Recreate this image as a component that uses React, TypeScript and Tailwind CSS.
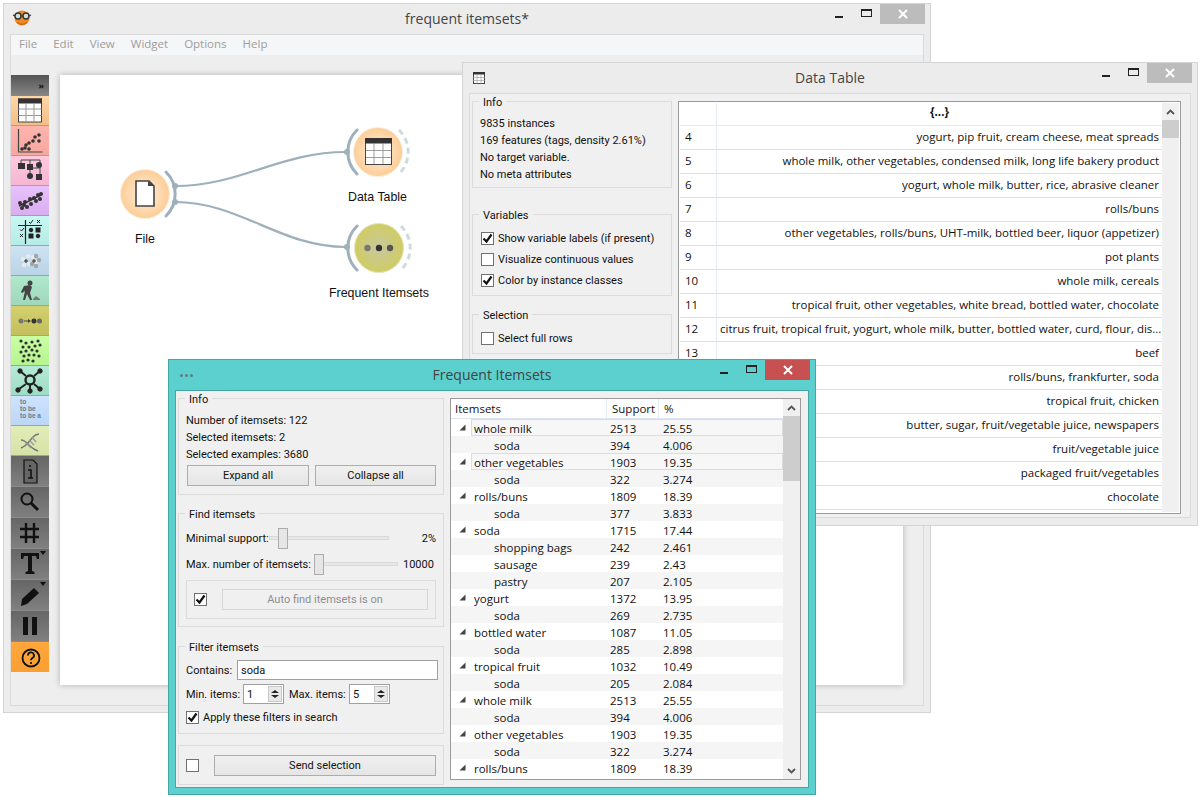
import type { ReactNode } from "react";

const ui = "font-['Open_Sans',sans-serif] text-[11.500px] leading-[17px] whitespace-nowrap text-[#111]";
const panel = "flex shrink-0 flex-col font-['Roboto',sans-serif] text-[11px]";

function WinControls({ active }: { active?: boolean }) {
  return (
    <div className="flex items-start justify-end">
      <span className="mr-[18px] mt-[12px] h-[2px] w-[8px] bg-[#222]" />
      <span className="mr-[8px] mt-[5px] h-[8px] w-[11px] border border-t-2 border-[#222]" />
      <span
        className={`flex h-[20px] w-[45px] items-center justify-center text-white ${active ? "bg-[#c75050]" : "bg-[#bcbcbc]"}`}
      >
        <svg width="10" height="10" viewBox="0 0 10 10" stroke="currentColor" strokeWidth="2">
          <path d="M1 1l8 8M9 1l-8 8" />
        </svg>
      </span>
    </div>
  );
}

function TitleBar({ icon, title, active }: { icon: ReactNode; title: string; active?: boolean }) {
  return (
    <div className="grid h-[30px] grid-cols-[1fr_auto_1fr] px-[5px]">
      <div className="flex h-[30px] items-center pl-[2px]">{icon}</div>
      <div className="pt-[4px] font-['Open_Sans',sans-serif] text-[14px] leading-[22px] text-[#444]">{title}</div>
      <WinControls active={active} />
    </div>
  );
}

function Group({ title, className, children }: { title?: string; className: string; children: ReactNode }) {
  return (
    <div className={`relative border border-[#dcdcdc] ${className}`}>
      {title ? <span className="absolute -top-[7px] left-[6px] bg-[#f0f0f0] px-[4px] leading-[15px]">{title}</span> : null}
      {children}
    </div>
  );
}

function Check({ on }: { on?: boolean }) {
  return (
    <span className="flex h-[13px] w-[13px] shrink-0 items-center justify-center border border-[#707070] bg-white">
      {on ? (
        <svg width="11" height="11" viewBox="0 0 11 11" fill="none" stroke="#111" strokeWidth="2.2">
          <path d="M1.5 5.5l3 3 5-7" />
        </svg>
      ) : null}
    </span>
  );
}

function Btn({ className, children }: { className: string; children: ReactNode }) {
  return (
    <div className={`flex h-[21px] items-center justify-center border border-[#adadad] bg-linear-to-b from-[#f0f0f0] to-[#e5e5e5] ${className}`}>
      {children}
    </div>
  );
}

function Chevron({ down }: { down?: boolean }) {
  return (
    <svg width="9" height="6" viewBox="0 0 9 6" fill="none" stroke="#555" strokeWidth="1.8">
      <path d={down ? "M1 1l3.5 3.5L8 1" : "M1 5l3.5-3.5L8 5"} />
    </svg>
  );
}

function Spin({ value }: { value: string }) {
  return (
    <div className="flex h-[20px] w-[41px] items-center border border-[#a0a0a0] bg-white pl-[3px]">
      <span className="flex-1 pt-[1px]">{value}</span>
      <span className="mr-[1px] flex h-[16px] w-[14px] flex-col items-center justify-center gap-[2px] border border-[#c8c8c8] bg-[#e8e8e8]">
        <span className="h-0 w-0 border-x-[4px] border-b-[3px] border-x-transparent border-b-[#222]" />
        <span className="h-0 w-0 border-x-[4px] border-t-[3px] border-x-transparent border-t-[#222]" />
      </span>
    </div>
  );
}

function Slider({ track, left }: { track: string; left: string }) {
  return (
    <div className={`relative h-[21px] shrink-0 ${track}`}>
      <div className="absolute left-0 right-0 top-[8px] h-[4px] border border-[#d9d9d9] bg-[#e7e7e7]" />
      <div className={`absolute top-0 h-[21px] w-[10px] border border-[#acacac] bg-[#e6e6e6] ${left}`} />
    </div>
  );
}

const dockColors = [
  "from-[#ffd6a6] to-[#f2bf88]",
  "from-[#ffb4ae] to-[#f7a79f]",
  "from-[#ffc9de] to-[#f6b6d2]",
  "from-[#e7c1fb] to-[#d9aef0]",
  "from-[#c8f8f3] to-[#b5ebe6]",
  "from-[#cde3f3] to-[#b9d4e6]",
  "from-[#afe8cd] to-[#9ed8bb]",
  "from-[#d4d06e] to-[#c2bf5c]",
  "from-[#caffa4] to-[#b5f58f]",
  "from-[#b4ead6] to-[#9fdcc5]",
  "from-[#cde3ff] to-[#bcd6f7]",
  "from-[#e2edb8] to-[#d4e2a6]",
];

function Dots({ pts, r = 1.8, fill = "#333" }: { pts: number[][]; r?: number; fill?: string }) {
  return (
    <>
      {pts.map(([x, y], i) => (
        <circle key={i} cx={x} cy={y} r={r} fill={fill} />
      ))}
    </>
  );
}

const dockIcons: ReactNode[] = [
  <g key="t">
    <rect x="7.5" y="3" width="23" height="23" fill="#fff" stroke="#444" />
    <rect x="7" y="2.5" width="24" height="5" fill="#333" />
    <path d="M7.5 13h23M7.5 19.5h23M15 7.5V26M23 7.5V26" stroke="#999" />
  </g>,
  <g key="s">
    <path d="M7.5 3v23h24" fill="none" stroke="#444" strokeWidth="1.2" />
    <Dots pts={[[11, 23], [15, 19], [18, 23], [22, 15], [18, 17], [24, 11], [28, 15], [28, 9], [14, 22]]} />
  </g>,
  <g key="tr">
    <path d="M10 7V4h19v3M19 4v4M29 9v3h-10M19 12v7M29 12v7" fill="none" stroke="#444" />
    <rect x="7" y="7" width="7" height="6" fill="#333" />
    <rect x="16" y="8" width="6" height="6" fill="#333" />
    <circle cx="28" cy="9" r="3" fill="#333" />
    <circle cx="19" cy="20" r="3" fill="#333" />
    <rect x="25" y="18" width="6" height="6" fill="#333" />
  </g>,
  <g key="r">
    <path d="M8 20L30 9" stroke="#333" strokeWidth="1.5" />
    <Dots r={2} pts={[[9, 17], [11, 22], [14, 16], [16, 21], [19, 13], [20, 18], [23, 12], [25, 15], [27, 9], [29, 13], [30, 8], [13, 19]]} />
  </g>,
  <g key="c" fill="none" stroke="#222">
    <path d="M14.5 4v24M7 9.5h24" strokeWidth="1.2" />
    <path d="M18 6l1.5 1.5L22 4M26 4l3 3M29 4l-3 3M9 13.5l1.5 1.5L13 12M9 18l3 3M12 18l-3 3" />
    <circle cx="20" cy="14" r="1.8" fill="#222" />
    <rect x="25" y="12" width="4" height="4" fill="#222" />
    <rect x="18" y="18" width="4" height="4" fill="#222" />
    <circle cx="27" cy="20" r="1.8" fill="#222" />
  </g>,
  <g key="b">
    <Dots fill="#eaeaea" r={2.2} pts={[[12, 13], [17, 10], [18, 18], [13, 19], [22, 11], [25, 16]]} />
    <Dots fill="#9fa6aa" r={2.2} pts={[[25, 10], [28, 14], [21, 18], [25, 20]]} />
    <path d="M13 15h4M15 13v4M21 15h4M23 13v4" stroke="#333" />
  </g>,
  <g key="d" fill="#444">
    <circle cx="19" cy="7" r="2.5" />
    <path d="M13 10l6-1 2 2-2 6 2 7h-2l-3-6-2 6h-2l2-9-3 2-1-1z" />
    <path d="M22 23l3-3 4 3v1h-7z" fill="#777" />
  </g>,
  <g key="f">
    <circle cx="10" cy="15" r="2.5" fill="#777" />
    <circle cx="23" cy="15" r="2.5" fill="#333" />
    <circle cx="28.5" cy="15" r="2.5" fill="#666" />
    <path d="M13 15h6" stroke="#444" />
    <path d="M17 13l3 2-3 2z" fill="#444" />
  </g>,
  <g key="l">
    <Dots r={1.6} pts={[[10, 5], [15, 7], [21, 6], [27, 5], [12, 11], [18, 11], [24, 10], [29, 9], [10, 16], [15, 15], [21, 14], [26, 15], [13, 20], [18, 19], [23, 19], [28, 20], [12, 25], [17, 24], [22, 25]]} />
  </g>,
  <g key="n" stroke="#222" fill="none">
    <circle cx="19" cy="14" r="4.5" strokeWidth="2.4" />
    <path d="M15 10l-6-5M23 10l6-5M15 18l-7 5M23 18l6 5M19 19v5" strokeWidth="2" />
    <Dots fill="#222" r={2.2} pts={[[9, 5], [29, 5], [7, 24], [29, 23], [19, 25]]} />
  </g>,
  null,
  <g key="dna" fill="none" stroke="#777" strokeWidth="1.4">
    <path d="M10 22c6-2 9-8 12-11 2-2 4-3 6-3" />
    <path d="M10 14c4 0 6 3 9 6 2 2 5 4 8 5" />
    <path d="M15 17l5 5M18 14l5 5M21 11l4 5" stroke="#999" />
  </g>,
  <g key="i">
    <path d="M13 4h9l4 4v19H13z" fill="#666" stroke="#111" strokeWidth="1.2" />
    <path d="M19 9v2M17 14h3v8h1.5M17 22h5" stroke="#111" strokeWidth="1.6" fill="none" />
  </g>,
  <g key="m" fill="none" stroke="#111">
    <circle cx="16" cy="12" r="5.5" strokeWidth="2" />
    <path d="M20 16l7 7" strokeWidth="3" />
  </g>,
  <path key="h" d="M15 5v20M23 5v20M9 11h19M9 19h19" stroke="#111" strokeWidth="2.4" />,
  <g key="x">
    <path d="M10 4h18v6h-2l-1-3h-4v15l2.500 1v2h-9v-2l2.500-1V7h-4l-1 3h-2z" fill="#111" />
    <path d="M29 2h6l-3 4z" fill="#111" />
  </g>,
  <g key="p">
    <path d="M10 26l1-7 12-11 5 5-12 11z" fill="#111" />
    <path d="M29 2h6l-3 4z" fill="#111" />
  </g>,
  <path key="pa" d="M12 6h5v18h-5zM21 6h5v18h-5z" fill="#111" />,
  <g key="q">
    <circle cx="20" cy="16" r="8.500" fill="none" stroke="#111" strokeWidth="1.800" />
    <path d="M17 13.500a3 3 0 1 1 4.500 2.500c-1 .6-1.500 1-1.500 2.200" fill="none" stroke="#111" strokeWidth="1.800" />
    <circle cx="20" cy="21" r="1.100" fill="#111" />
  </g>,
];

function Dock() {
  return (
    <div className="h-[597px] w-[38px] shrink-0">
      <div className="flex h-[21px] items-center justify-end bg-linear-to-b from-[#555] to-[#878787] pr-[5px] text-[9px] font-bold leading-none text-[#111]">
        »
      </div>
      {dockColors.map((c, i) => (
        <div key={c} className={`h-[30px] border-b border-[#9aa69a] bg-linear-to-b ${c}`}>
          {i === 10 ? (
            <div className="pl-[9px] pt-[2px] font-['Liberation_Sans',sans-serif] text-[6.500px] font-bold leading-[7px] text-[#6a7a8a]">
              to
              <br />
              to be
              <br />
              to be a
            </div>
          ) : (
            <svg width="38" height="30" viewBox="0 0 38 30">
              {dockIcons[i]}
            </svg>
          )}
        </div>
      ))}
      {[12, 13, 14, 15, 16, 17].map((i) => (
        <div key={i} className="h-[31px] border-b border-[#8a8a8a] bg-linear-to-b from-[#666] to-[#808080]">
          <svg width="38" height="30" viewBox="0 0 38 30">
            {dockIcons[i]}
          </svg>
        </div>
      ))}
      <div className="h-[30px] bg-linear-to-b from-[#ffa73c] to-[#fb9f32]">
        <svg width="38" height="30" viewBox="0 0 38 30">
          {dockIcons[18]}
        </svg>
      </div>
    </div>
  );
}

function Workflow() {
  return (
    <div className="relative h-[610px] w-[843px] bg-white font-['Liberation_Sans',sans-serif] text-[12.400px] leading-[14px] text-[#111] shadow-[0_0_6px_rgba(0,0,0,0.25)]">
      <svg width="843" height="610" viewBox="60 75 843 610" className="absolute inset-0">
        <defs>
          <radialGradient id="orange">
            <stop offset="0%" stopColor="#fff0dd" />
            <stop offset="100%" stopColor="#fdcd96" />
          </radialGradient>
          <radialGradient id="olive">
            <stop offset="0%" stopColor="#c9c7a0" />
            <stop offset="100%" stopColor="#cfcd63" />
          </radialGradient>
        </defs>
        <g fill="none" stroke="#9db0bb" strokeWidth="2.2">
          <path d="M175 186C240 186 280 152 346 152" />
          <path d="M175 202C240 202 280 247 346 247" />
        </g>
        <g fill="none" stroke="#9db0bb" strokeWidth="3" strokeLinecap="round">
          <path d="M166 172a31 31 0 0 1 0 44" />
          <path d="M357 130a31 31 0 0 0 0 44" />
          <path d="M357 226a31 31 0 0 0 0 44" />
        </g>
        <g fill="none" stroke="#cfdadf" strokeWidth="3" strokeDasharray="6 4">
          <path d="M399 130a31 31 0 0 1 0 44" />
          <path d="M401 226a31 31 0 0 1 0 44" />
        </g>
        <g fill="#9db0bb">
          <circle cx="175" cy="186" r="3" />
          <circle cx="175" cy="202" r="3" />
          <circle cx="347" cy="152" r="3" />
          <circle cx="347" cy="247" r="3" />
        </g>
        <circle cx="145" cy="194" r="24.500" fill="url(#orange)" stroke="#fbeee0" />
        <path d="M136 181h13l5 5v20h-18z" fill="#fff" stroke="#444" strokeWidth="1.600" />
        <path d="M148 181l6 5h-6z" fill="#444" />
        <circle cx="378" cy="152" r="24.500" fill="url(#orange)" stroke="#fbeee0" />
        <rect x="365.500" y="138.500" width="26" height="26" fill="#fff" stroke="#444" />
        <rect x="365" y="138" width="27" height="5.500" fill="#333" />
        <path d="M366 150.500h25M366 157.500h25M374 143v21M383 143v21" stroke="#888" strokeWidth="0.800" />
        <circle cx="379" cy="248" r="24.500" fill="url(#olive)" stroke="#e4e4c0" />
        <circle cx="367.500" cy="248" r="3.200" fill="#777" />
        <circle cx="379" cy="248" r="3.200" fill="#333" />
        <circle cx="390" cy="248" r="3.200" fill="#555" />
      </svg>
      <span className="absolute left-[75px] top-[157px]">File</span>
      <span className="absolute left-[288px] top-[115px]">Data Table</span>
      <span className="absolute left-[269px] top-[211px]">Frequent Itemsets</span>
    </div>
  );
}

function MainWindow() {
  return (
    <div className="absolute left-[3px] top-[3px] h-[710px] w-[928px] border border-[#d4d4d4] bg-[#ececec]">
      <TitleBar
        title="frequent itemsets*"
        icon={
          <svg width="20" height="18" viewBox="0 0 20 18" className="-mt-[2px] ml-[1px]">
            <circle cx="10" cy="9" r="7.500" fill="#f08a1e" />
            <path d="M5 13c3 3 7 3 10 0" stroke="#b45f10" fill="none" />
            <circle cx="6" cy="7" r="3" fill="#cfe2e2" stroke="#333" strokeWidth="1.400" />
            <circle cx="14" cy="7" r="3" fill="#cfe2e2" stroke="#333" strokeWidth="1.400" />
            <path d="M9 7h2M1 6l2 1M19 6l-2 1" stroke="#333" strokeWidth="1.200" />
          </svg>
        }
      />
      <div className="mx-[6px] h-[672px] border border-[#dadada] bg-[#eeeeee]">
        <div className="flex h-[20px] items-center gap-[16px] bg-[#f5f6f7] pb-[2px] pl-[8px] font-['Open_Sans',sans-serif] text-[11.500px] text-[#9d9d9d]">
          <span>File</span>
          <span>Edit</span>
          <span>View</span>
          <span>Widget</span>
          <span>Options</span>
          <span>Help</span>
        </div>
        <div className="flex pt-[20px]">
          <Dock />
          <div className="ml-[11px]">
            <Workflow />
          </div>
        </div>
      </div>
    </div>
  );
}

const tableRows: [string, string][] = [
  ["4", "yogurt, pip fruit, cream cheese, meat spreads"],
  ["5", "whole milk, other vegetables, condensed milk, long life bakery product"],
  ["6", "yogurt, whole milk, butter, rice, abrasive cleaner"],
  ["7", "rolls/buns"],
  ["8", "other vegetables, rolls/buns, UHT-milk, bottled beer, liquor (appetizer)"],
  ["9", "pot plants"],
  ["10", "whole milk, cereals"],
  ["11", "tropical fruit, other vegetables, white bread, bottled water, chocolate"],
  ["12", "citrus fruit, tropical fruit, yogurt, whole milk, butter, bottled water, curd, flour, dis..."],
  ["13", "beef"],
  ["", "rolls/buns, frankfurter, soda"],
  ["", "tropical fruit, chicken"],
  ["", "butter, sugar, fruit/vegetable juice, newspapers"],
  ["", "fruit/vegetable juice"],
  ["", "packaged fruit/vegetables"],
  ["", "chocolate"],
];

function DataTableWindow() {
  return (
    <div className={`absolute left-[462px] top-[62px] h-[464px] w-[736px] border border-[#d4d4d4] bg-[#ececec] ${ui}`}>
      <TitleBar
        title="Data Table"
        icon={
          <svg width="12" height="12" viewBox="0 0 12 12" className="ml-[3px]">
            <rect x="0.500" y="0.500" width="11" height="11" fill="#fff" stroke="#444" />
            <rect x="0" y="0" width="12" height="2.500" fill="#333" />
            <path d="M0 5.500h12M0 8.500h12M4 2v10M8 2v10" stroke="#999" strokeWidth="0.600" />
          </svg>
        }
      />
      <div className="mx-[6px] flex h-[425px] gap-[6px] border border-[#dadada] bg-[#f0f0f0] pl-[2px] pt-[7px]">
        <div className={`w-[200px] ${panel}`}>
          <Group title="Info" className="h-[87px] pl-[7px] pt-[13px]">
            <div>9835 instances</div>
            <div>169 features (tags, density 2.61%)</div>
            <div>No target variable.</div>
            <div>No meta attributes</div>
          </Group>
          <Group title="Variables" className="mt-[26px] flex h-[82px] flex-col gap-[8px] pl-[8px] pt-[17px]">
            {[["Show variable labels (if present)", true], ["Visualize continuous values", false], ["Color by instance classes", true]].map(([label, on]) => (
              <label key={label as string} className="flex h-[13px] items-center gap-[4px]">
                <Check on={on as boolean} />
                <span>{label}</span>
              </label>
            ))}
          </Group>
          <Group title="Selection" className="mt-[18px] flex h-[40px] items-start pl-[8px] pt-[17px]">
            <label className="flex h-[13px] items-center gap-[4px]">
              <Check />
              <span>Select full rows</span>
            </label>
          </Group>
        </div>
        <div className="flex h-[413px] w-[503px] border border-[#9a9a9a] bg-white p-[1px]">
          <div className="min-w-0 flex-1 overflow-hidden">
            <div className="flex h-[23px] border-b border-[#e4ebf5] bg-white">
              <div className="w-[37px] border-r border-[#e4ebf5]" />
              <div className="flex-1 text-center font-bold">{"{...}"}</div>
            </div>
            {tableRows.map(([n, text], i) => (
              <div key={i} className="flex h-[24px] border-b border-[#dedede] leading-[22px]">
                <div className="w-[37px] shrink-0 border-r border-[#e4ebf5] pl-[5px]">{n}</div>
                <div className={`flex-1 px-[3px] ${n === "12" ? "text-left" : "text-right"}`}>{text}</div>
              </div>
            ))}
          </div>
          <div className="flex w-[17px] shrink-0 flex-col items-center bg-[#f0f0f0]">
            <div className="flex h-[17px] items-center">
              <Chevron />
            </div>
            <div className="h-[18px] w-full bg-[#cdcdcd]" />
          </div>
        </div>
      </div>
    </div>
  );
}

const treeRows: [string, string, string, number, boolean?][] = [
  ["whole milk", "2513", "25.55", 0, true],
  ["soda", "394", "4.006", 1],
  ["other vegetables", "1903", "19.35", 0, true],
  ["soda", "322", "3.274", 1],
  ["rolls/buns", "1809", "18.39", 0],
  ["soda", "377", "3.833", 1],
  ["soda", "1715", "17.44", 0],
  ["shopping bags", "242", "2.461", 1],
  ["sausage", "239", "2.43", 1],
  ["pastry", "207", "2.105", 1],
  ["yogurt", "1372", "13.95", 0],
  ["soda", "269", "2.735", 1],
  ["bottled water", "1087", "11.05", 0],
  ["soda", "285", "2.898", 1],
  ["tropical fruit", "1032", "10.49", 0],
  ["soda", "205", "2.084", 1],
  ["whole milk", "2513", "25.55", 0],
  ["soda", "394", "4.006", 1],
  ["other vegetables", "1903", "19.35", 0],
  ["soda", "322", "3.274", 1],
  ["rolls/buns", "1809", "18.39", 0],
];

function TreeRow({ row, odd }: { row: (typeof treeRows)[number]; odd: boolean }) {
  const [name, support, pct, level, selected] = row;
  return (
    <div className={`flex h-[17px] ${odd ? "bg-[#f5f5f5]" : "bg-white"}`}>
      <div className="flex w-[20px] shrink-0 items-center justify-center pl-[2px]">
        {level === 0 ? (
          <svg width="7" height="7" viewBox="0 0 7 7">
            <path d="M6.500 0.500v6h-6z" fill="#444" />
          </svg>
        ) : null}
      </div>
      <div className={`grid flex-1 grid-cols-[136px_53px_1fr] items-center ${selected ? "border border-[#dcdcdc] bg-[#f7f7f7]" : "border border-transparent"}`}>
        <span className={level === 1 ? "pl-[22px]" : "pl-[2px]"}>{name}</span>
        <span className="pl-[2px]">{support}</span>
        <span className="pl-[2px]">{pct}</span>
      </div>
    </div>
  );
}

function FrequentWindow() {
  return (
    <div className={`absolute left-[168px] top-[359px] h-[436px] w-[648px] border border-[#45a5a3] bg-[#5bd0ce] ${ui}`}>
      <TitleBar
        active
        title="Frequent Itemsets"
        icon={
          <span className="ml-[4px] flex gap-[2px]">
            <span className="h-[3px] w-[3px] rounded-full bg-[#5d7d7d]" />
            <span className="h-[3px] w-[3px] rounded-full bg-[#5d7d7d]" />
            <span className="h-[3px] w-[3px] rounded-full bg-[#5d7d7d]" />
          </span>
        }
      />
      <div className="mx-[6px] flex h-[398px] gap-[6px] border border-[#45a5a3] bg-[#f0f0f0] pl-[2px] pt-[7px]">
        <div className={`w-[266px] ${panel}`}>
          <Group title="Info" className="h-[97px] pl-[7px] pt-[13px]">
            <div>Number of itemsets: 122</div>
            <div>Selected itemsets: 2</div>
            <div>Selected examples: 3680</div>
            <div className="mt-[2px] flex gap-[6px] pl-[1px]">
              <Btn className="w-[122px]">Expand all</Btn>
              <Btn className="w-[121px]">Collapse all</Btn>
            </div>
          </Group>
          <Group title="Find itemsets" className="mt-[18px] h-[114px] px-[7px] pt-[14px]">
            <div className="flex h-[21px] items-center">
              <span className="w-[83px] shrink-0">Minimal support:</span>
              <Slider track="w-[120px]" left="left-[9px]" />
              <span className="flex-1 text-right">2%</span>
            </div>
            <div className="mt-[5px] flex h-[21px] items-center">
              <span className="w-[128px] shrink-0">Max. number of itemsets:</span>
              <Slider track="w-[84px]" left="left-0" />
              <span className="pl-[5px]">10000</span>
            </div>
            <div className="mt-[5px] flex h-[39px] items-center gap-[15px] border border-[#dcdcdc] pl-[7px]">
              <Check on />
              <div className="flex h-[21px] w-[206px] items-center justify-center border border-[#d8d8d8] text-[#8f8f8f]">Auto find itemsets is on</div>
            </div>
          </Group>
          <Group title="Filter itemsets" className="mt-[19px] h-[88px] pl-[7px] pt-[13px]">
            <div className="flex h-[20px] items-center">
              <span className="w-[51px]">Contains:</span>
              <div className="flex h-[20px] w-[201px] items-center border border-[#a0a0a0] bg-white pl-[3px]">soda</div>
            </div>
            <div className="mt-[4px] flex items-center">
              <span className="w-[57px]">Min. items:</span>
              <Spin value="1" />
              <span className="w-[65px] pl-[5px]">Max. items:</span>
              <Spin value="5" />
            </div>
            <label className="mt-[7px] flex h-[13px] items-center gap-[4px]">
              <Check on />
              <span>Apply these filters in search</span>
            </label>
          </Group>
          <Group className="mt-[11px] flex h-[40px] items-center pl-[7px]">
            <Check />
            <Btn className="ml-[15px] w-[222px]">Send selection</Btn>
          </Group>
        </div>
        <div className="flex h-[382px] w-[351px] border border-[#9a9a9a] bg-white">
          <div className="min-w-0 flex-1">
            <div className="grid h-[20px] grid-cols-[156px_52px_1fr] border-b border-[#dde6f4]">
              <span className="border-r border-[#e4ebf5] pl-[4px] leading-[19px]">Itemsets</span>
              <span className="border-r border-[#e4ebf5] pl-[5px] leading-[19px]">Support</span>
              <span className="pl-[5px] leading-[19px]">%</span>
            </div>
            {treeRows.map((row, i) => (
              <TreeRow key={i} row={row} odd={i % 2 === 1} />
            ))}
          </div>
          <div className="flex w-[17px] shrink-0 flex-col items-center justify-between bg-[#f0f0f0] pb-[5px]">
            <div className="w-full">
              <div className="flex h-[17px] items-center justify-center">
                <Chevron />
              </div>
              <div className="h-[65px] w-full bg-[#cdcdcd]" />
            </div>
            <Chevron down />
          </div>
        </div>
      </div>
    </div>
  );
}

export default function App() {
  return (
    <div className="relative h-[797px] w-[1201px] overflow-hidden bg-white">
      <MainWindow />
      <DataTableWindow />
      <FrequentWindow />
    </div>
  );
}
